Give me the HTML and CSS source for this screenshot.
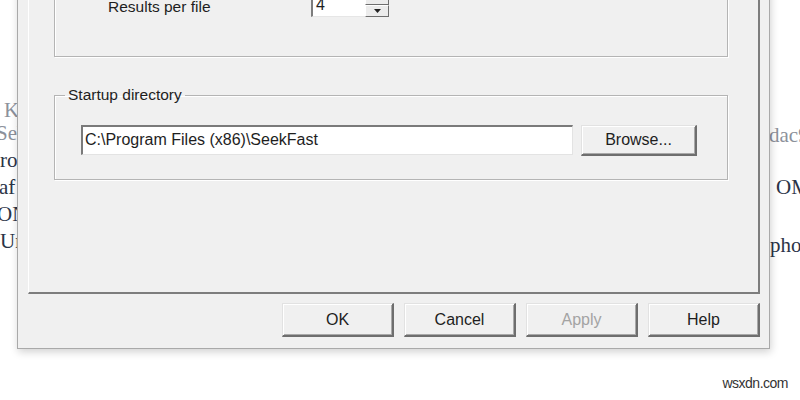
FILE: index.html
```html
<!DOCTYPE html>
<html>
<head>
<meta charset="utf-8">
<link rel="stylesheet" href="styles.css">
</head>
<body>
<div class="desk">
  <div class="bg-left">
    <div class="ln gray k">K</div>
    <div class="ln gray seb">Seb</div>
    <div class="ln ros">ros</div>
    <div class="ln af">af</div>
    <div class="ln on">ON</div>
    <div class="ln ur">Ur</div>
  </div>
  <div class="bg-right">
    <div class="ln gray dac">dac9</div>
    <div class="ln om">OM</div>
    <div class="ln phon">phon</div>
  </div>
</div>

<div class="dialog">
  <div class="page">
    <div class="group">
      <div class="row">
        <span class="lbl">Results per file</span>
        <div class="spin">
          <div class="spin-field">4</div>
          <div class="spin-btns">
            <div class="spin-btn"></div>
            <div class="spin-btn"><svg width="7" height="4" viewBox="0 0 7 4"><path d="M0 0h7L3.5 4z" fill="#222"/></svg></div>
          </div>
        </div>
      </div>
    </div>
    <fieldset class="group2">
      <legend>Startup directory</legend>
      <div class="dir-row">
        <div class="field">C:\Program Files (x86)\SeekFast</div>
        <button class="btn browse">Browse...</button>
      </div>
    </fieldset>
  </div>
  <div class="actions">
    <button class="btn act">OK</button>
    <button class="btn act">Cancel</button>
    <button class="btn act disabled">Apply</button>
    <button class="btn act">Help</button>
  </div>
</div>

<div class="watermark">wsxdn.com</div>
</body>
</html>
```

FILE: styles.css
```css
html, body {
  margin: 0;
  padding: 0;
}
body {
  width: 800px;
  height: 400px;
  overflow: hidden;
  position: relative;
  background: #fff;
  font-family: "Liberation Sans", Arial, sans-serif;
}

/* backdrop page text */
.desk {
  display: flex;
  justify-content: space-between;
  font-family: "Liberation Serif", "Times New Roman", serif;
  font-size: 21px;
  line-height: 26px;
  color: #2b3447;
}
.bg-left {
  padding-top: 97px;
}
.bg-right {
  padding-top: 122px;
  width: 32px;
  overflow: hidden;
  white-space: nowrap;
}
.ln.gray {
  color: #8c919b;
}
.k { padding-left: 4px; }
.seb { margin-top: -3px; margin-left: -4px; }
.ros { margin-top: 1px; }
.af { margin-top: 1px; margin-left: -1px; }
.on { margin-top: 1px; margin-left: -3px; }
.ur { margin-top: 1px; }
.dac { padding-left: 1px; }
.om { margin-top: 26px; padding-left: 8px; }
.phon { margin-top: 32px; padding-left: 2px; }

/* dialog window */
.dialog {
  position: absolute;
  left: 17px;
  top: -60px;
  width: 753px;
  box-sizing: border-box;
  background: #f0f0f0;
  border: 1px solid #a9a9a9;
  box-shadow: 1px 3px 8px rgba(0, 0, 0, 0.18);
  padding: 10px 9px 11px 10px;
  color: #1e1e1e;
  font-size: 15.5px;
}
.page {
  height: 343px;
  box-sizing: border-box;
  border-top: 1px solid #fff;
  border-left: 1px solid #fff;
  border-right: 2px solid #7d7d7d;
  border-bottom: 2px solid #7d7d7d;
  padding: 8px 30px 0 25px;
}
.group {
  border: 1px solid #b4b4b4;
  box-shadow: inset 1px 1px 0 #fff, 1px 1px 0 #fff;
  padding: 32px 0 39px 53px;
}
.row {
  display: flex;
  align-items: center;
  height: 24px;
}
.lbl {
  width: 203px;
  line-height: 18px;
  margin-top: 4px;
}
.spin {
  display: flex;
  height: 24px;
}
.spin-field {
  width: 54px;
  box-sizing: border-box;
  background: #fff;
  border-left: 2px solid #7d7d7d;
  border-top: 2px solid #7d7d7d;
  border-bottom: 1px solid #e6e6e6;
  padding-left: 3px;
  font-size: 16px;
  line-height: 20px;
}
.spin-btns {
  width: 24px;
  display: flex;
  flex-direction: column;
}
.spin-btn {
  flex: 1;
  box-sizing: border-box;
  background: #ececec;
  border-top: 1px solid #fff;
  border-left: 1px solid #fff;
  border-right: 1px solid #6e6e6e;
  border-bottom: 1px solid #6e6e6e;
  display: flex;
  align-items: center;
  justify-content: center;
}

.group2 {
  margin: 29px 0 0;
  border: 1px solid #b4b4b4;
  box-shadow: inset 1px 1px 0 #fff, 1px 1px 0 #fff;
  padding: 21px 0 23px 26px;
  min-width: 0;
}
.group2 legend {
  padding: 0 3px;
  margin-left: -16px;
  line-height: 18px;
  font-size: 15.5px;
}
.dir-row {
  display: flex;
  align-items: flex-start;
  gap: 8px;
}
.field {
  width: 492px;
  height: 30px;
  box-sizing: border-box;
  background: #fff;
  border-top: 2px solid #7a7a7a;
  border-left: 2px solid #7a7a7a;
  border-right: 1px solid #e3e3e3;
  border-bottom: 1px solid #e3e3e3;
  padding-left: 2px;
  font-size: 16px;
  line-height: 26px;
  color: #1e1e1e;
}

.btn {
  font-family: "Liberation Sans", Arial, sans-serif;
  font-size: 16px;
  color: #1e1e1e;
  background: #f0f0f0;
  box-sizing: border-box;
  border-top: 1px solid #e2e2e2;
  border-left: 1px solid #e2e2e2;
  border-right: 2px solid #6e6e6e;
  border-bottom: 2px solid #6e6e6e;
  box-shadow: inset 1px 1px 0 #fff, inset -1px -1px 0 #a9a9a9;
  padding: 0;
  margin: 0;
}
.browse {
  width: 116px;
  height: 31px;
}
.actions {
  display: flex;
  justify-content: flex-end;
  gap: 10px;
  margin-top: 9px;
}
.act {
  width: 112px;
  height: 34px;
}
.act.disabled {
  color: #a3a3a3;
}

.watermark {
  position: absolute;
  right: 12px;
  bottom: 9px;
  font-family: "Liberation Sans", Arial, sans-serif;
  font-size: 14px;
  letter-spacing: -0.5px;
  color: #333;
}
```
